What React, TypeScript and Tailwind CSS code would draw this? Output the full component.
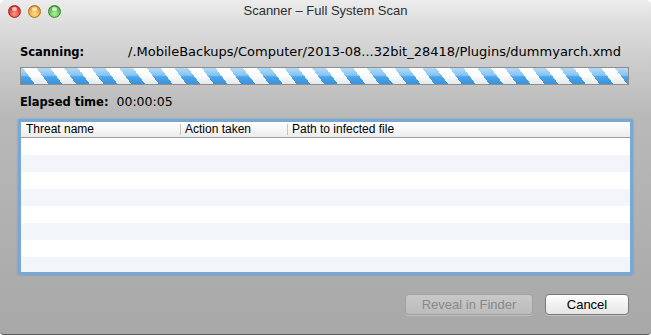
import React from "react";

const rows = Array.from({ length: 8 }, (_, i) => i);

const Light: React.FC<{ kind: "red" | "yellow" | "green" }> = ({ kind }) => {
  const cls =
    kind === "red"
      ? "bg-[radial-gradient(circle_at_50%_70%,#ff9a8c_0%,#e8423a_55%,#b5221c_100%)] border-[#9c2a24]"
      : kind === "yellow"
        ? "bg-[radial-gradient(circle_at_50%_70%,#ffe08a_0%,#f2a63a_55%,#c87a12_100%)] border-[#a8741e]"
        : "bg-[radial-gradient(circle_at_50%_70%,#b8f0a0_0%,#62c352_55%,#2f8a25_100%)] border-[#3a8530]";
  return (
    <div className={`relative h-[13px] w-[13px] rounded-full border ${cls}`}>
      <div className="absolute left-[3px] top-[1px] h-[4px] w-[5px] rounded-full bg-white/70" />
    </div>
  );
};

export default function App() {
  return (
    <div className="h-[335px] w-[651px] bg-white font-['Liberation_Sans',Arial,sans-serif]">
      <div className="flex h-[335px] w-[651px] flex-col overflow-hidden rounded-t-[5px] rounded-b-[4px] border-b border-[#5c5c5c] bg-[linear-gradient(to_bottom,#ececec_0px,#dedede_22px,#cdcdcd_60px,#b9b9b9_115px,#acacac_280px,#a8a8a8_335px)]">
        {/* title bar */}
        <div className="grid h-[22px] shrink-0 grid-cols-[1fr_auto_1fr] items-center">
          <div className="flex items-center gap-[7px] pl-[8px]">
            <Light kind="red" />
            <Light kind="yellow" />
            <Light kind="green" />
          </div>
          <div className="text-[13px] leading-[22px] text-[#2e2e2e]">Scanner – Full System Scan</div>
          <div />
        </div>

        <div className="flex flex-col px-[20px] font-['DejaVu_Sans',sans-serif]">
          <div className="mt-[22px] flex h-[15px] items-baseline leading-[15px] text-black">
            <div className="w-[108px] shrink-0 text-[11.5px] font-bold">Scanning:</div>
            <div className="whitespace-nowrap text-[13px]">
              /.MobileBackups/Computer/2013-08...32bit_28418/Plugins/dummyarch.xmd
            </div>
          </div>

          <div className="mt-[8px] h-[18px] w-[609px] border border-[#8e8e8e] bg-[image:repeating-linear-gradient(53deg,transparent_0px,transparent_11px,rgba(255,255,255,0.97)_11px,rgba(255,255,255,0.97)_22px),linear-gradient(to_bottom,#b2daf7_0%,#86c4f2_45%,#4aa6ee_55%,#3f9fec_100%)]">
            <div className="h-full w-full bg-[linear-gradient(to_bottom,rgba(255,255,255,0)_50%,rgba(0,0,0,0.08)_100%)]" />
          </div>

          <div className="mt-[9px] flex h-[15px] items-baseline gap-[8px] leading-[15px] text-black">
            <div className="text-[11.5px] font-bold">Elapsed time:</div>
            <div className="text-[12.5px]">00:00:05</div>
          </div>

          <div className="-mx-[2px] mt-[10px] h-[156px] rounded-[2px] border-[3px] border-[#78a8d6] bg-white font-['Liberation_Sans',Arial,sans-serif] shadow-[0_0_2px_rgba(60,110,170,0.5)]">
            <div className="h-[150px] overflow-hidden">
              <div className="flex h-[16px] items-center border-b border-[#9c9c9c] bg-[linear-gradient(to_bottom,#ffffff,#ececec)] text-[12px] leading-[15px] text-black">
                <div className="w-[159px] pl-[5px]">Threat name</div>
                <div className="h-[11px] w-px bg-[#c4c4c4]" />
                <div className="w-[106px] pl-[4px]">Action taken</div>
                <div className="h-[11px] w-px bg-[#c4c4c4]" />
                <div className="flex-1 pl-[4px]">Path to infected file</div>
              </div>
              {rows.map((i) => (
                <div key={i} className={i % 2 === 0 ? "h-[17px] bg-white" : "h-[17px] bg-[#f2f5fa]"} />
              ))}
            </div>
          </div>

          <div className="mr-[2px] mt-[19px] flex justify-end gap-[12px] font-['Liberation_Sans',Arial,sans-serif] text-[13px]">
            <button className="h-[21px] w-[128px] rounded-[4px] border border-[#a2a2a2] bg-[linear-gradient(to_bottom,#c8c8c8,#bcbcbc)] text-[#888888] shadow-[0_1px_0_rgba(255,255,255,0.25)]">
              Reveal in Finder
            </button>
            <button className="h-[21px] w-[84px] rounded-[4px] border border-[#7a7a7a] bg-[linear-gradient(to_bottom,#ffffff,#f1f1f1_50%,#e6e6e6)] text-black shadow-[0_1px_0_rgba(255,255,255,0.3)]">
              Cancel
            </button>
          </div>
        </div>
      </div>
    </div>
  );
}
